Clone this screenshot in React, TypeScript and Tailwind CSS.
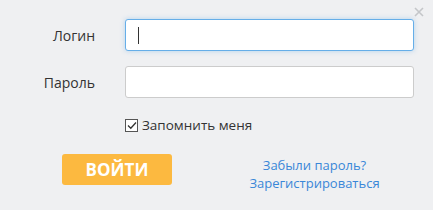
import React from 'react';

const App = () => {
  return (
    <div
      className="relative w-[433px] h-[210px] bg-[#eff0f2] text-[#333] text-[14px]"
      style={{ fontFamily: '"Open Sans", "Noto Sans", sans-serif' }}
    >
      {/* Close */}
      <button className="absolute right-[9px] top-[7px] text-[#c4c6c9] leading-none">
        <svg width="10" height="10" viewBox="0 0 10 10">
          <path d="M1 1L9 9M9 1L1 9" stroke="currentColor" strokeWidth="1.6" />
        </svg>
      </button>

      <div className="flex flex-col pt-[19px]">
        {/* Login */}
        <div className="flex items-center">
          <label className="w-[95px] text-right">Логин</label>
          <div className="ml-[30px] w-[289px] h-[32px] bg-white border border-[#66aee8] rounded-[3px] shadow-[0_0_5px_rgba(102,174,232,0.45)] flex items-center pl-[12px]">
            <span className="w-px h-[17px] bg-[#333]" />
          </div>
        </div>

        {/* Password */}
        <div className="flex items-center mt-[15px]">
          <label className="w-[95px] text-right">Пароль</label>
          <div className="ml-[30px] w-[289px] h-[32px] bg-white border border-[#cccccc] rounded-[3px]" />
        </div>

        {/* Remember */}
        <div className="flex items-center mt-[17px] ml-[125px] h-[20px]">
          <span className="w-[13px] h-[13px] border border-[#555] bg-white flex items-center justify-center">
            <svg width="10" height="9" viewBox="0 0 10 9">
              <path d="M1 4.5L3.8 7.2L9 1.5" stroke="#333" strokeWidth="1.3" fill="none" />
            </svg>
          </span>
          <span className="ml-[4px] text-[13.5px]">Запомнить меня</span>
        </div>

        {/* Actions */}
        <div className="flex items-start mt-[19px]">
          <button className="ml-[62px] w-[110px] h-[31px] bg-[#fcb940] rounded-[3px] text-white font-bold text-[17px] leading-none">
            ВОЙТИ
          </button>
          <div className="flex flex-col items-center ml-[78px] w-[129px] text-[#3a87d8] text-[13px] leading-[18px] pt-[2px]">
            <a href="#">Забыли пароль?</a>
            <a href="#">Зарегистрироваться</a>
          </div>
        </div>
      </div>
    </div>
  );
};

export default App;
